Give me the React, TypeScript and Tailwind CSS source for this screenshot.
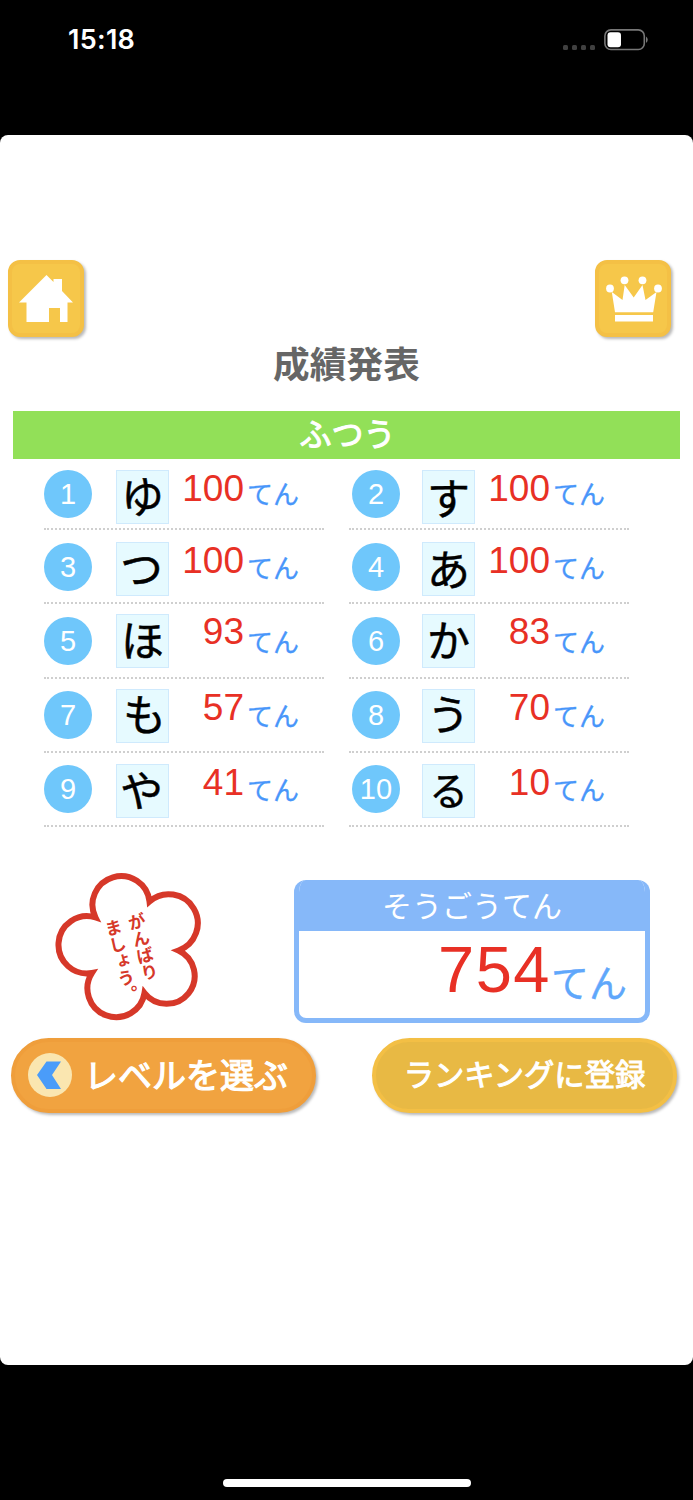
import React from 'react';

interface Result {
  no: number;
  kana: string;
  kanaClass: string;
  score: number;
}

interface Row {
  badgeTop: string;
  tileTop: string;
  scoreTop: string;
  unitTop: string;
  items: Result[];
}

const rows: Row[] = [
  {
    badgeTop: 'mt-[14px]', tileTop: 'mt-[14px]', scoreTop: 'mt-[14px]', unitTop: 'mt-[18px]',
    items: [
      { no: 1, kana: 'ゆ', kanaClass: '-translate-y-[3px]', score: 100 },
      { no: 2, kana: 'す', kanaClass: '-translate-y-[1px]', score: 100 },
    ],
  },
  {
    badgeTop: 'mt-[13px]', tileTop: 'mt-[12px]', scoreTop: 'mt-[12px]', unitTop: 'mt-[18px]',
    items: [
      { no: 3, kana: 'つ', kanaClass: '-translate-x-px -translate-y-[3px] rotate-3', score: 100 },
      { no: 4, kana: 'あ', kanaClass: '-translate-y-[2px]', score: 100 },
    ],
  },
  {
    badgeTop: 'mt-[13px]', tileTop: 'mt-[10px]', scoreTop: 'mt-[9px]', unitTop: 'mt-[18px]',
    items: [
      { no: 5, kana: 'ほ', kanaClass: '-translate-y-[3px]', score: 93 },
      { no: 6, kana: 'か', kanaClass: '-translate-y-[3px]', score: 83 },
    ],
  },
  {
    badgeTop: 'mt-[12px]', tileTop: 'mt-[10px]', scoreTop: 'mt-[10px]', unitTop: 'mt-[17px]',
    items: [
      { no: 7, kana: 'も', kanaClass: 'translate-x-[2px] -translate-y-[4px]', score: 57 },
      { no: 8, kana: 'う', kanaClass: '-translate-y-[4px] rotate-6', score: 70 },
    ],
  },
  {
    badgeTop: 'mt-[12px]', tileTop: 'mt-[11px]', scoreTop: 'mt-[11px]', unitTop: 'mt-[17px]',
    items: [
      { no: 9, kana: 'や', kanaClass: '-translate-x-px -translate-y-[3px] rotate-6', score: 41 },
      { no: 10, kana: 'る', kanaClass: '-translate-y-[3px] scale-90', score: 10 },
    ],
  },
];

const StatusBar: React.FC = () => (
  <div className="flex h-[135px] items-start justify-between pl-[68px] pr-[44px] pt-[24px]">
    <span className="font-['Inter',sans-serif] text-[27px] leading-8 font-semibold tracking-[0.3px] text-white">15:18</span>
    <div className="flex items-end gap-[9px] pt-[5px]">
      <div className="flex gap-[4px] pb-[1px]">
        {[0, 1, 2, 3].map(i => (
          <span key={i} className="h-[5px] w-[5px] rounded-[1.5px] bg-[#404040]"></span>
        ))}
      </div>
      <svg width="45" height="22" viewBox="0 0 45 22" fill="none">
        <rect x="0.9" y="0.9" width="39.4" height="19.6" rx="6" stroke="#777" strokeWidth="1.6" />
        <rect x="3.5" y="3.2" width="13.5" height="15" rx="3" fill="#fff" />
        <path d="M42 7.5 Q45.5 10.5 42 14 Z" fill="#777" />
      </svg>
    </div>
  </div>
);

const ResultCell: React.FC<{ item: Result; row: Row; right: boolean }> = ({ item, row, right }) => (
  <div className="flex h-full w-[280px] items-start border-b-2 border-dotted border-[#cfcfcf]">
    <div className={`flex h-12 w-12 shrink-0 items-center justify-center rounded-full bg-[#6fc7fb] pt-[1px] font-['Liberation_Sans',sans-serif] text-[29px] leading-none text-white ${right ? 'ml-[3px]' : ''} ${row.badgeTop}`}>
      {item.no}
    </div>
    <div className={`flex h-[54px] w-[53px] shrink-0 items-center justify-center border border-[#cfeafd] bg-[#e6faff] ${right ? 'ml-[22px]' : 'ml-6'} ${row.tileTop}`}>
      <span className={`text-[43px] leading-[54px] text-black [-webkit-text-stroke:0.5px_black] ${item.kanaClass}`}>{item.kana}</span>
    </div>
    <div className={`w-[75px] shrink-0 text-right font-['Liberation_Sans',sans-serif] text-[37px] leading-[38px] text-[#e83025] ${row.scoreTop}`}>
      {item.score}
    </div>
    <span className={`ml-[3px] text-[26px] leading-[38px] whitespace-nowrap text-[#4896fa] [-webkit-text-stroke:0.3px_#4896fa] ${row.unitTop}`}>てん</span>
  </div>
);

const FlowerStamp: React.FC = () => (
  <div className="relative h-[150px] w-[150px]">
    <svg width="150" height="150" viewBox="54 871 150 150" fill="none">
      <path
        d="M95.5 917.5 A28.6 28.6 0 1 1 149.5 901.5 A29 29 0 1 1 178.5 950.5 A28 28 0 1 1 144.5 993 A28.7 28.7 0 1 1 92 973 A28.6 28.6 0 1 1 95.5 917.5 Z"
        stroke="#d63829"
        strokeWidth="6"
        strokeMiterlimit="6"
      />
    </svg>
    <div className="absolute inset-0 flex items-center justify-center">
      <p className="translate-x-[4px] translate-y-[12px] -rotate-[14deg] text-[17.3px] leading-[24px] font-bold whitespace-nowrap text-[#d63829] [writing-mode:vertical-rl]">
        がんばり<br />ましょう。
      </p>
    </div>
  </div>
);

const App: React.FC = () => {
  return (
    <div className="flex h-[1500px] w-[693px] flex-col overflow-hidden bg-black font-['Noto_Sans_CJK_JP',sans-serif]">
      <StatusBar />

      <main className="flex h-[1229.5px] shrink-0 flex-col rounded-[8px] bg-white pt-[125px]">
        <div className="flex h-[77px] justify-between pl-2 pr-[22px]">
          <button className="flex h-[77px] w-[76px] items-center justify-center rounded-[12px] border-4 border-[#f4c045] bg-[#f6c74a] shadow-[2px_2px_3px_rgba(0,0,0,0.28)]">
            <svg className="shrink-0" width="54" height="48" viewBox="0 0 54 48" fill="#fff">
              <path d="M0 27.5 L27.5 0 L34.5 7 V4 H43 V16 L54 27.5 H48.5 V47 H41 V33 H30 V47 H7.5 V27.5 Z" />
            </svg>
          </button>
          <button className="flex h-[77px] w-[76px] items-center justify-center rounded-[12px] border-4 border-[#f4c045] bg-[#f6c74a] shadow-[2px_2px_3px_rgba(0,0,0,0.28)]">
            <svg className="ml-[2px] shrink-0" width="56" height="46" viewBox="0 0 56 46" fill="#fff">
              <circle cx="4" cy="12.5" r="3.9" />
              <circle cx="18.5" cy="4.3" r="3.9" />
              <circle cx="36.5" cy="4.3" r="3.9" />
              <circle cx="52" cy="12.5" r="3.9" />
              <path d="M5.8 16 L16.5 24 L18.7 9 L27.7 21.5 L36.5 9 L39.5 24 L50.5 16 L47.2 36.3 H9 Z" />
              <rect x="9" y="39" width="38" height="6.5" />
            </svg>
          </button>
        </div>

        <h1 className="mt-[5px] h-[43px] text-center text-[36.7px] leading-[40px] font-bold text-[#666]">成績発表</h1>

        <div className="ml-[13px] mt-[26px] h-[48px] w-[667px] bg-[#92e058] pl-[2px] text-center text-[32px] leading-[42px] text-white [-webkit-text-stroke:1.1px_white]">
          ふつう
        </div>

        <div className="-mt-[3px] flex flex-col">
          {rows.map((row, i) => (
            <div key={i} className="flex h-[74.2px] gap-[25px] pl-[44px]">
              <ResultCell item={row.items[0]} row={row} right={false} />
              <ResultCell item={row.items[1]} row={row} right />
            </div>
          ))}
        </div>

        <div className="mt-[44px] flex pl-[54px]">
          <FlowerStamp />
          <div className="ml-[90px] mt-[9px] h-[143px] w-[356px] overflow-hidden rounded-[12px] border-[5px] border-t-0 border-[#86b8f9] bg-white">
            <div className="h-[51px] bg-[#86b8f9] text-center text-[30px] leading-[49px] text-white">そうごうてん</div>
            <div className="flex justify-end pr-[18px]">
              <span className="font-['Liberation_Sans',sans-serif] text-[65px] leading-[78px] tracking-[1.5px] text-[#e83025]">754</span>
              <span className="mt-[11px] text-[38px] leading-[78px] text-[#5fa7fb] [-webkit-text-stroke:0.4px_#5fa7fb]">てん</span>
            </div>
          </div>
        </div>

        <div className="mt-[15px] flex gap-[56px] pl-[11px]">
          <button className="flex h-[75px] w-[305px] items-center rounded-full border-4 border-[#ef9e3b] bg-[#f1a340] pl-[13px] shadow-[2px_2px_3px_rgba(0,0,0,0.28)]">
            <svg className="shrink-0" width="44" height="44" viewBox="0 0 44 44">
              <circle cx="22" cy="22" r="22" fill="#fae6b0" />
              <path d="M18.5 8.5 H33 L24 22 L33 36 H18.5 L9 22 Z" fill="#4a9cf9" />
            </svg>
            <span className="ml-[12px] pb-[2px] text-[34px] leading-[50px] whitespace-nowrap text-white [-webkit-text-stroke:1.2px_white]">レベルを選ぶ</span>
          </button>
          <button className="flex h-[75px] w-[305px] items-center justify-center rounded-full border-4 border-[#f3bf45] bg-[#e8b944] pb-[4px] text-[30.3px] leading-[50px] whitespace-nowrap text-white shadow-[2px_2px_3px_rgba(0,0,0,0.28)] [-webkit-text-stroke:1px_white]">
            ランキングに登録
          </button>
        </div>
      </main>

      <div className="mx-auto mt-[114px] h-2 w-[248px] rounded-full bg-white"></div>
    </div>
  );
};

export default App;
